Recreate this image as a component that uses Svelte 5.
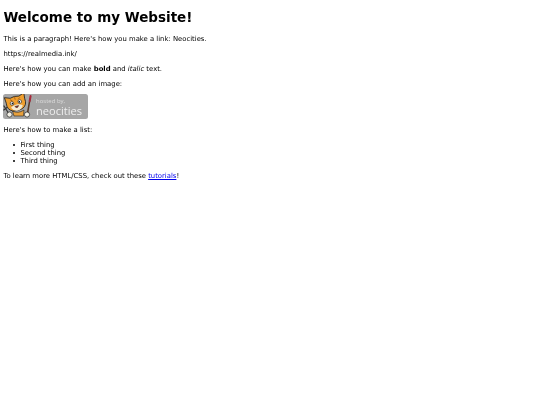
<script>
    let things = ['First thing', 'Second thing', 'Third thing'];
</script>

<main>
    <h1>Welcome to my Website!</h1>
    <p>This is a paragraph! Here's how you make a link: Neocities.</p>
    <p>https://realmedia.ink/</p>
    <p>Here's how you can make <strong>bold</strong> and <em>italic</em> text.</p>
    <p>Here's how you can add an image:</p>
    <svg class="badge" viewBox="0 0 85 25" width="85" height="25" role="img" aria-label="Hosted by Neocities">
        <rect x="0" y="0" width="85" height="25" rx="2.5" fill="#a6a6a6"/>
        <!-- brush -->
        <path d="M24 22 L27 5" stroke="#5b3a24" stroke-width="1.5" stroke-linecap="round"/>
        <path d="M26.7 7 L27.6 2" stroke="#a82a3c" stroke-width="2" stroke-linecap="round"/>
        <circle cx="24" cy="20.5" r="2.6" fill="#f4f1e6" stroke="#222" stroke-width="0.7"/>
        <!-- paw and wrench -->
        <path d="M1 12 L6 20 M0.8 16 L4 13.5" stroke="#333" stroke-width="1.2" stroke-linecap="round"/>
        <circle cx="6.5" cy="20.5" r="2.6" fill="#f4f1e6" stroke="#222" stroke-width="0.7"/>
        <path d="M9.5 17 Q15 20 21 16 L20.5 22 L11 22 Z" fill="#e9a13c" stroke="#222" stroke-width="0.6"/>
        <!-- head, tilted -->
        <g transform="rotate(-14 13 9)">
            <path d="M3.5 7 L3 1 L8.5 3 Q13 1.5 17.5 3 L23 1 L22.5 7 Q23.5 13.5 18 16 Q13 17.5 8 16 Q2.5 13.5 3.5 7 Z" fill="#ef9f2f" stroke="#222" stroke-width="0.8"/>
            <path d="M7 12.5 Q13 8.5 19 12.5 Q17.5 16.5 13 16.7 Q8.5 16.5 7 12.5 Z" fill="#f7ead0"/>
            <circle cx="9" cy="8.5" r="1.8" fill="#fff" stroke="#222" stroke-width="0.6"/>
            <circle cx="17" cy="8.5" r="1.8" fill="#fff" stroke="#222" stroke-width="0.6"/>
            <circle cx="9.4" cy="8.7" r="0.8" fill="#111"/>
            <circle cx="16.6" cy="8.7" r="0.8" fill="#111"/>
            <path d="M11 12 Q13 15.5 15 12 Z" fill="#8c2f23" stroke="#222" stroke-width="0.4"/>
            <path d="M8 4.5 L10 6 M13 3 L13 5.5 M18 4.5 L16 6" stroke="#a85f14" stroke-width="0.9"/>
        </g>
        <text class="hosted" x="33" y="8.5">hosted by,</text>
        <text class="neo" x="33" y="20.5" textLength="46" lengthAdjust="spacingAndGlyphs">neocities</text>
    </svg>
    <p>Here's how to make a list:</p>
    <ul>
        {#each things as thing}
        <li>{thing}</li>
        {/each}
    </ul>
    <p>To learn more HTML/CSS, check out these <a href="#tutorials">tutorials</a>!</p>
</main>

<style>
:global(body) {
    background: white;
}

main {
    padding: 3.4px;
    font-family: "DejaVu Sans", sans-serif;
    font-size: 6.85px;
    line-height: 8px;
    color: black;
    will-change: transform;
}

h1 {
    font-size: 13.5px;
    line-height: 16px;
    margin: 5.5px 0 10.5px;
}

p {
    margin: 6.75px 0;
}

ul {
    margin: 7px 0;
    padding-left: 17px;
    list-style: none;
}

li {
    display: flex;
    align-items: center;
}

li::before {
    content: '';
    width: 2px;
    height: 2px;
    margin-left: -7px;
    margin-right: 5px;
    border-radius: 50%;
    background: black;
}

a {
    color: #0000ee;
}

.badge {
    display: block;
}

.hosted {
    font-family: "Open Sans", sans-serif;
    font-size: 6px;
    fill: #dcdcdc;
}

.neo {
    font-family: "Open Sans", sans-serif;
    font-size: 10.5px;
    fill: #eeeeee;
}
</style>
